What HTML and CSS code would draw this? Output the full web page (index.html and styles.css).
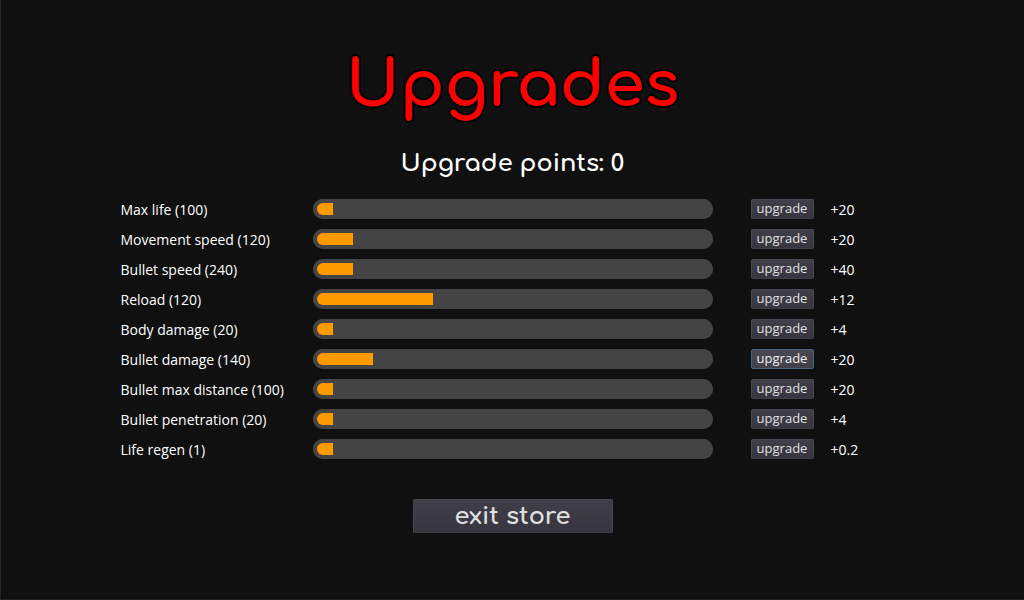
FILE: index.html
```html
<!DOCTYPE html>
<html lang="en">
<head>
<meta charset="utf-8">
<meta name="viewport" content="width=device-width, initial-scale=1">
<title>Upgrades</title>
<link rel="stylesheet" href="styles.css">
</head>
<body>
<main class="store">
  <h1 class="title">Upgrades</h1>
  <p class="points">Upgrade points: 0</p>
  <ul class="upgrades">
    <li class="row"><label class="name" for="u1">Max life (100)</label><progress class="bar" id="u1" max="100" value="5"></progress><button class="btn" type="button">upgrade</button><span class="gain">+20</span></li>
    <li class="row"><label class="name" for="u2">Movement speed (120)</label><progress class="bar" id="u2" max="100" value="10"></progress><button class="btn" type="button">upgrade</button><span class="gain">+20</span></li>
    <li class="row"><label class="name" for="u3">Bullet speed (240)</label><progress class="bar" id="u3" max="100" value="10"></progress><button class="btn" type="button">upgrade</button><span class="gain">+40</span></li>
    <li class="row"><label class="name" for="u4">Reload (120)</label><progress class="bar" id="u4" max="100" value="30"></progress><button class="btn" type="button">upgrade</button><span class="gain">+12</span></li>
    <li class="row"><label class="name" for="u5">Body damage (20)</label><progress class="bar" id="u5" max="100" value="5"></progress><button class="btn" type="button">upgrade</button><span class="gain">+4</span></li>
    <li class="row"><label class="name" for="u6">Bullet damage (140)</label><progress class="bar" id="u6" max="100" value="15"></progress><button class="btn btn-active" type="button">upgrade</button><span class="gain">+20</span></li>
    <li class="row"><label class="name" for="u7">Bullet max distance (100)</label><progress class="bar" id="u7" max="100" value="5"></progress><button class="btn" type="button">upgrade</button><span class="gain">+20</span></li>
    <li class="row"><label class="name" for="u8">Bullet penetration (20)</label><progress class="bar" id="u8" max="100" value="5"></progress><button class="btn" type="button">upgrade</button><span class="gain">+4</span></li>
    <li class="row"><label class="name" for="u9">Life regen (1)</label><progress class="bar" id="u9" max="100" value="5"></progress><button class="btn" type="button">upgrade</button><span class="gain">+0.2</span></li>
  </ul>
  <button class="btn btn-exit" type="button">exit store</button>
</main>
</body>
</html>
```
FILE: styles.css
```css
* {
  box-sizing: border-box;
}

body {
  margin: 0;
  background: #101010;
  color: #fff;
  font-family: "Open Sans", "Noto Sans", sans-serif;
  font-size: 14px;
  line-height: 20px;
}

.store {
  display: flex;
  flex-direction: column;
  align-items: center;
  min-height: 100vh;
  padding: 40px 24px;
  border-left: 1px solid #23252d;
  border-bottom: 1px solid #221f22;
}

.title,
.points,
.btn-exit {
  font-family: Comfortaa, Quicksand, Lato, sans-serif;
}

.title {
  margin: 0;
  color: #f00;
  font-size: 64px;
  font-weight: 700;
  line-height: 92px;
  -webkit-text-stroke: 4px #000;
  paint-order: stroke fill;
  stroke-linejoin: round;
}

.points {
  margin: 16px 0 0;
  font-size: 24px;
  font-weight: 700;
  line-height: 32px;
}

.upgrades {
  display: flex;
  flex-direction: column;
  gap: 10px;
  width: 100%;
  max-width: 784px;
  margin: 19px 0 40px;
  padding: 0;
  list-style: none;
}

.row {
  display: grid;
  grid-template-columns: 192px minmax(0, 1fr) 101px 91px;
  align-items: center;
}

.name,
.gain {
  padding-top: 2px;
  line-height: 18px;
}

.gain {
  padding-left: 17px;
}

.bar {
  appearance: none;
  width: 100%;
  height: 20px;
  border: 0;
  border-radius: 10px;
  background: #444;
}

.bar::-webkit-progress-bar {
  border-radius: 10px;
  background: #444;
}

.bar::-webkit-progress-value {
  box-sizing: border-box;
  border: solid transparent;
  border-width: 4px 0 4px 4px;
  border-radius: 10px 0 0 10px;
  background: #ff9900;
  background-clip: padding-box;
}

.btn {
  justify-self: end;
  min-width: 63px;
  height: 20px;
  padding: 0 4px 2px;
  border: 1px solid #4a4854;
  border-bottom-color: #413f4a;
  border-radius: 2px;
  background: linear-gradient(#403e49, #37353f);
  color: #e0e0e0;
  font: 13px/16px "Open Sans", "Noto Sans", sans-serif;
}

.btn-active {
  border-color: #48607f;
  background: linear-gradient(#4a4753, #413f4a);
  color: #f0f0f0;
}

.btn-exit {
  min-width: 200px;
  height: 34px;
  padding: 2px 4px 0;
  font-family: Comfortaa, Quicksand, Lato, sans-serif;
  font-size: 24px;
  font-weight: 700;
  line-height: 30px;
}
```
